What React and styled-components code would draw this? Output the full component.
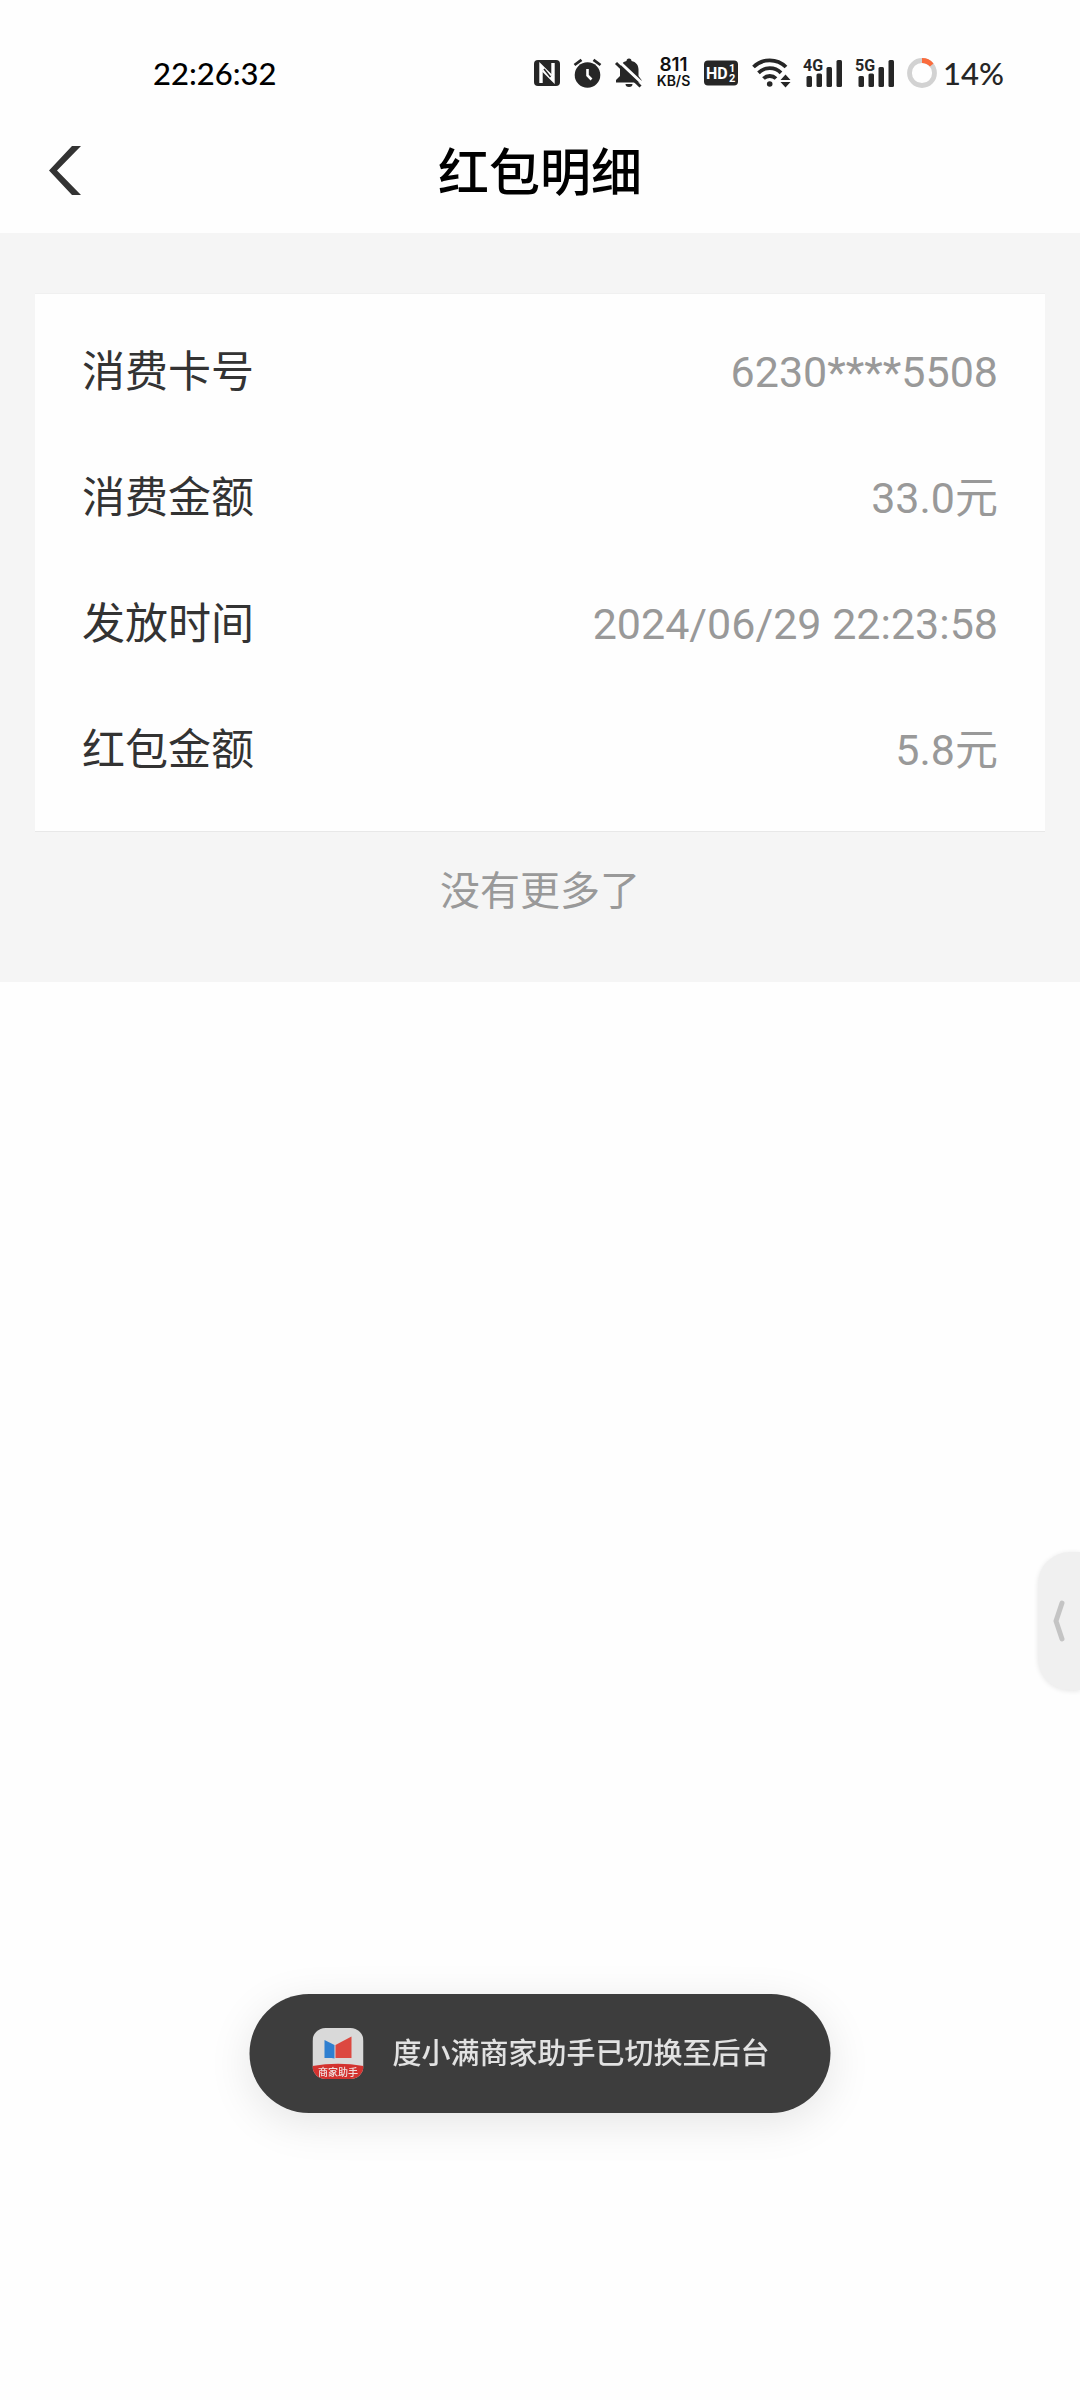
import React from 'react';
import styled, { createGlobalStyle } from 'styled-components';

const GlobalStyle = createGlobalStyle`
    * {
        box-sizing: border-box;
    }
    body {
        margin: 0;
        background: #fefefe;
        font-family: Roboto, "Noto Sans CJK SC", sans-serif;
    }
`

const Page = styled.div`
    min-height: 100vh;
`

const StatusBar = styled.div`
    display: flex;
    align-items: center;
    justify-content: space-between;
    height: 112px;
    padding: 34px 76px 0 153px;
    color: #000;
    font-family: Lato, "Noto Sans CJK SC", sans-serif;
    font-size: 31px;
    font-weight: 500;
    line-height: 40px;
`

const StatusIcons = styled.div`
    display: flex;
    align-items: center;
    gap: 12px;
    color: #262626;

    svg {
        display: block;
        flex: none;
    }
`

const Speed = styled.div`
    width: 35px;
    color: #111;
    font-family: Inter, Roboto, sans-serif;
    font-size: ${props => props.$size}px;
    font-weight: 600;
    line-height: 16px;
    text-align: center;
`

const Battery = styled.div`
    display: flex;
    align-items: center;
    gap: 6px;
`

const NavBar = styled.header`
    display: grid;
    grid-template-columns: 1fr auto 1fr;
    align-items: center;
    height: 121px;
    padding: 0 48px;
`

const BackButton = styled.button`
    justify-self: start;
    padding: 0;
    border: 0;
    background: none;
    cursor: pointer;

    svg {
        display: block;
    }
`

const Title = styled.h1`
    margin: 0;
    padding-top: 2px;
    color: #000;
    font-size: 51px;
    font-weight: 500;
    line-height: 60px;
`

const Content = styled.main`
    padding: 60px 35px;
    background: #f5f5f5;
`

const Card = styled.dl`
    margin: 0;
    padding: 15px 47px 18px;
    background: #fefefe;
    border-top: 1px solid #f0f0f0;
    border-bottom: 1px solid #e8e8e8;
`

const Row = styled.div`
    display: flex;
    align-items: center;
    justify-content: space-between;
    height: 126px;
    font-size: 43px;
    line-height: 60px;
`

const Label = styled.dt`
    color: #333;
`

const Value = styled.dd`
    margin: 0;
    color: #999;
`

const NoMore = styled.p`
    margin: 30px 0 0;
    color: #999;
    font-size: 40px;
    line-height: 60px;
    text-align: center;
`

const SideTab = styled.button`
    position: fixed;
    top: 1552px;
    right: 0;
    display: flex;
    align-items: center;
    width: 42px;
    height: 138px;
    padding: 0 0 0 13px;
    border: 0;
    border-radius: 32px 0 0 32px;
    background: #f0f0f0;
    box-shadow: 0 1px 5px rgba(0, 0, 0, 0.1);
    cursor: pointer;
`

const Toast = styled.div`
    position: fixed;
    bottom: 287px;
    left: 50%;
    transform: translateX(-50%);
    display: flex;
    align-items: center;
    gap: 29px;
    height: 119px;
    padding: 0 61px 0 63px;
    border-radius: 60px;
    background: #3d3d3d;
    box-shadow: 0 10px 44px rgba(0, 0, 0, 0.1);
    color: #e2e2e2;
    font-size: 29px;
    font-weight: 500;
    line-height: 40px;
    white-space: nowrap;
`

const NfcIcon = () => (
    <svg width="28" height="28" viewBox="0 0 28 28">
        <rect x="1" y="1" width="26" height="26" rx="4" fill="currentColor" />
        <path d="M8 24V7L18 17" fill="none" stroke="#fff" strokeWidth="3.4" />
        <path d="M20 4V21L10 11" fill="none" stroke="#fff" strokeWidth="3.4" />
        <path d="M11 10L17.500 18" stroke="currentColor" strokeWidth="1.6" />
    </svg>
)

const AlarmIcon = () => (
    <svg width="29" height="30" viewBox="0 0 29 30">
        <circle cx="14.500" cy="17" r="12.800" fill="currentColor" />
        <path d="M1.500 7L8.500 1.800M27.500 7L20.500 1.800" stroke="currentColor" strokeWidth="2.800" />
        <path d="M14.500 11V17.500L18.500 21.500" fill="none" stroke="#fff" strokeWidth="2.600" />
    </svg>
)

const MuteIcon = () => (
    <svg width="30" height="30" viewBox="0 0 30 30">
        <path d="M12.500 3a2.500 2.500 0 0 1 5 0c4.500 1 7 4 7 8.500V18l3 4v2.500H2V22l4-4v-6.500C6 7 8.500 4 12.500 3z" fill="currentColor" />
        <path d="M11.500 26h7a3.500 3 0 0 1-7 0z" fill="currentColor" />
        <path d="M4 2.500L29 26" stroke="#fefefe" strokeWidth="3" />
        <path d="M2 5L26.500 28.500" stroke="currentColor" strokeWidth="3" />
    </svg>
)

const HdIcon = () => (
    <svg width="36" height="26" viewBox="0 0 36 26">
        <rect x="1" y="0.500" width="34" height="25" rx="4" fill="currentColor" />
        <g fill="#fff" fontFamily='"Liberation Sans Narrow", Roboto, sans-serif' fontWeight="700">
            <text x="3" y="19" fontSize="16">HD</text>
            <text x="26" y="12" fontSize="11">1</text>
            <text x="26" y="22" fontSize="11">2</text>
        </g>
    </svg>
)

const WifiIcon = () => (
    <svg width="40" height="30" viewBox="0 0 40 30">
        <g fill="none" stroke="currentColor" strokeWidth="3.800">
            <path d="M2.500 9a23 23 0 0 1 32.500 0" />
            <path d="M7.500 14.800a16 16 0 0 1 22.500 0" />
            <path d="M12.500 20.500a9 9 0 0 1 12.500 0" />
        </g>
        <circle cx="18.700" cy="26" r="2.800" fill="currentColor" />
        <path d="M34.500 16.500l5 5.500h-10zM34.500 29.500l5-5.500h-10z" fill="currentColor" />
    </svg>
)

const SignalIcon = ({ label }) => (
    <svg width="40" height="38" viewBox="0 -4 40 38">
        <text x="0" y="13" fontSize="16" fontWeight="700" fontFamily='"Liberation Sans Narrow", Roboto, sans-serif' fill="currentColor">{label}</text>
        <g fill="currentColor">
            <rect x="3.500" y="18" width="5.500" height="11" rx="1.500" />
            <rect x="13.500" y="15.500" width="5.500" height="13.500" rx="1.500" />
            <rect x="23.500" y="9" width="5.500" height="20" rx="1.500" />
            <rect x="33.500" y="2" width="5.500" height="27" rx="1.500" />
        </g>
    </svg>
)

const BatteryRing = () => (
    <svg width="30" height="30" viewBox="0 0 30 30">
        <circle cx="15" cy="15" r="12.500" fill="none" stroke="#d2d2d2" strokeWidth="4.800" />
        <path d="M15 2.500A12.500 12.500 0 0 1 24.700 7.100" fill="none" stroke="#fa6b3c" strokeWidth="4.800" />
    </svg>
)

const MerchantLogo = () => (
    <svg width="51" height="51" viewBox="0 0 51 51">
        <clipPath id="logo-clip">
            <rect width="51" height="51" rx="13" />
        </clipPath>
        <g clipPath="url(#logo-clip)">
            <rect width="51" height="51" fill="#d9d9d9" />
            <path d="M0 38Q25.500 33.500 51 38V51H0z" fill="#d3322f" />
        </g>
        <path d="M12 12L22 17V30.500L19 30H12z" fill="#2f7fd0" />
        <path d="M23 17L39 8.500V30H23z" fill="#dc4840" />
        <text x="25.500" y="47.500" fontSize="10" fontWeight="500" textAnchor="middle" fill="#f0dede" fontFamily='"Noto Sans CJK SC", sans-serif'>商家助手</text>
    </svg>
)

const details = [
    { label: '消费卡号', value: '6230****5508' },
    { label: '消费金额', value: '33.0元' },
    { label: '发放时间', value: '2024/06/29 22:23:58' },
    { label: '红包金额', value: '5.8元' },
]

export default function App() {
    return (
        <Page>
            <GlobalStyle />
            <StatusBar>
                <span>22:26:32</span>
                <StatusIcons>
                    <NfcIcon />
                    <AlarmIcon />
                    <MuteIcon />
                    <div>
                        <Speed $size={19}>811</Speed>
                        <Speed $size={14}>KB/S</Speed>
                    </div>
                    <HdIcon />
                    <WifiIcon />
                    <SignalIcon label="4G" />
                    <SignalIcon label="5G" />
                    <Battery>
                        <BatteryRing />
                        <span>14%</span>
                    </Battery>
                </StatusIcons>
            </StatusBar>
            <NavBar>
                <BackButton aria-label="返回">
                    <svg width="34" height="54" viewBox="0 0 34 54">
                        <path d="M24 0h9L9 24.500L33 49h-9L1 24.500z" fill="#333" />
                    </svg>
                </BackButton>
                <Title>红包明细</Title>
            </NavBar>
            <Content>
                <Card>
                    {details.map(item => (
                        <Row key={item.label}>
                            <Label>{item.label}</Label>
                            <Value>{item.value}</Value>
                        </Row>
                    ))}
                </Card>
                <NoMore>没有更多了</NoMore>
            </Content>
            <SideTab aria-label="展开侧边栏">
                <svg width="14" height="42" viewBox="0 0 14 42">
                    <path d="M11 3L5 21L11 39" fill="none" stroke="#c4c4c4" strokeWidth="5" strokeLinecap="round" strokeLinejoin="round" />
                </svg>
            </SideTab>
            <Toast role="status">
                <MerchantLogo />
                <span>度小满商家助手已切换至后台</span>
            </Toast>
        </Page>
    )
}
